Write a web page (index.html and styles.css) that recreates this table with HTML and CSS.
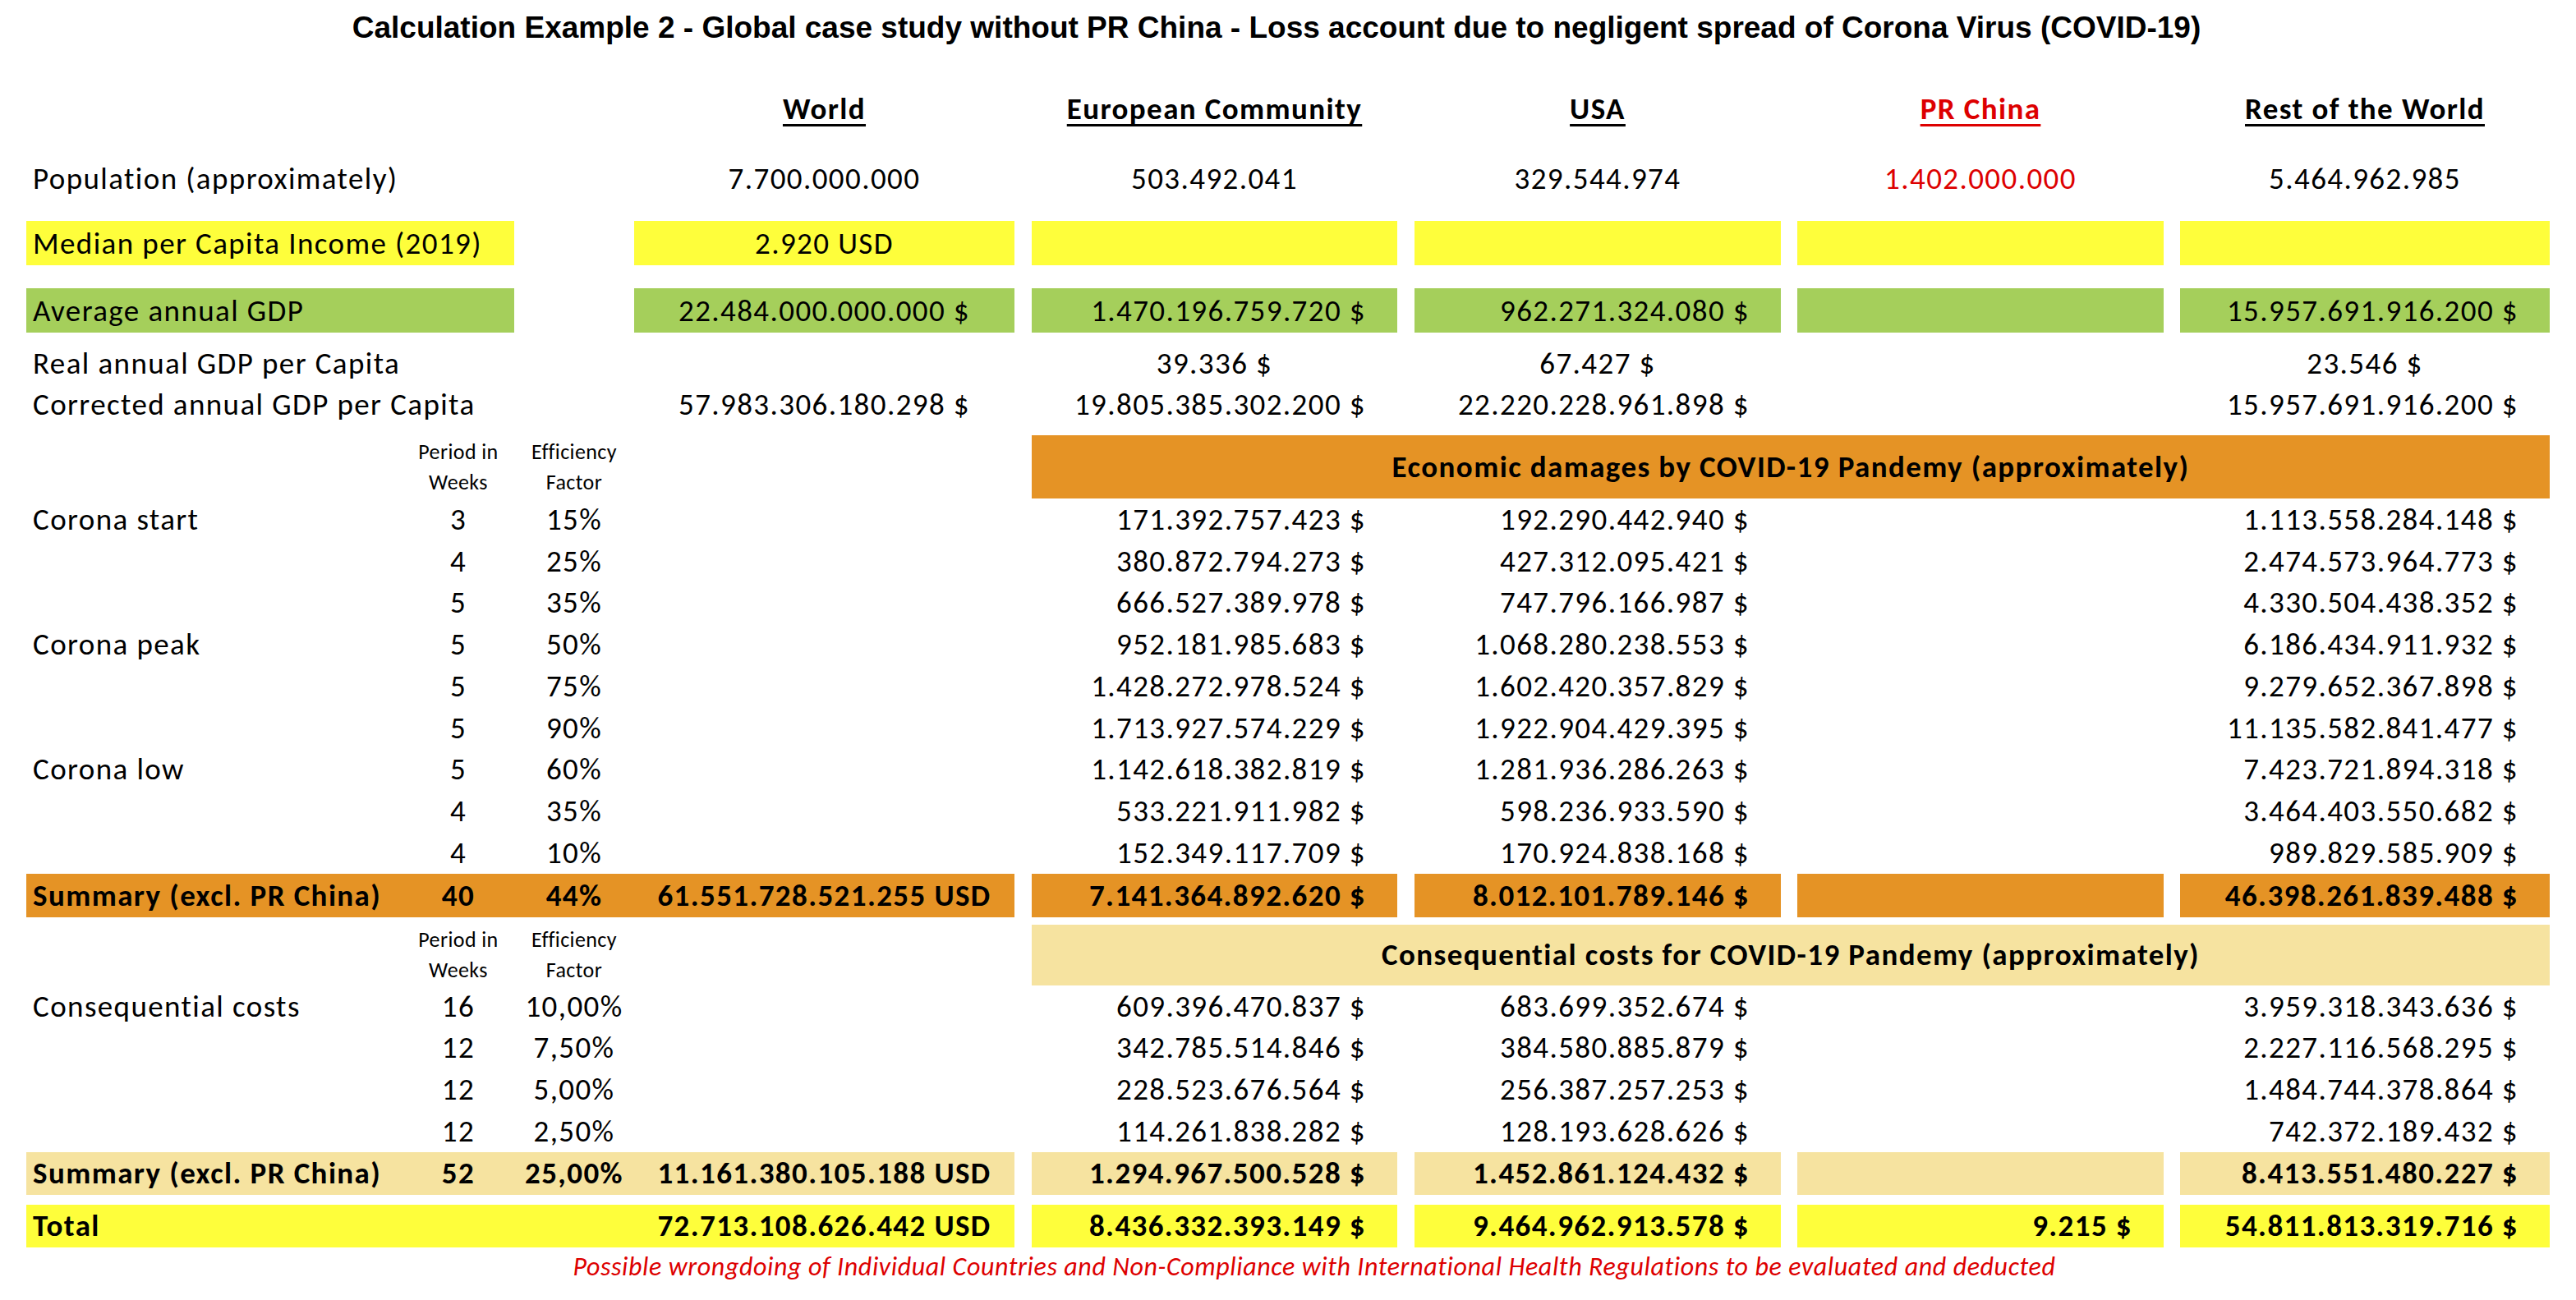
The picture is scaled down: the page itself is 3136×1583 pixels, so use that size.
FILE: index.html
```html
<!DOCTYPE html>
<html lang="en">
<head>
<meta charset="utf-8">
<title>Calculation Example 2</title>
<link rel="stylesheet" href="styles.css">
</head>
<body>
<div class="sheet">
  <h1 class="title">Calculation Example 2 - Global case study without PR China - Loss account due to negligent spread of Corona Virus (COVID-19)</h1>

  <div class="row r-head">
    <div class="cD ctr hd">World</div>
    <div class="cE ctr hd">European Community</div>
    <div class="cF ctr hd">USA</div>
    <div class="cG ctr hd red">PR China</div>
    <div class="cH ctr hd">Rest of the World</div>
  </div>

  <div class="row r-pop">
    <div class="cA lt nw">Population (approximately)</div>
    <div class="cD ctr">7.700.000.000</div>
    <div class="cE ctr">503.492.041</div>
    <div class="cF ctr">329.544.974</div>
    <div class="cG ctr red">1.402.000.000</div>
    <div class="cH ctr">5.464.962.985</div>
  </div>

  <div class="row r-box r-median">
    <div class="cAB lt yellow">Median per Capita Income (2019)</div>
    <div class="cD ctr yellow">2.920 USD</div>
    <div class="cE yellow"></div>
    <div class="cF yellow"></div>
    <div class="cG yellow"></div>
    <div class="cH yellow"></div>
  </div>

  <div class="row r-box r-gdp">
    <div class="cAB lt green">Average annual GDP</div>
    <div class="cD ctr green">22.484.000.000.000 $</div>
    <div class="cE rt green">1.470.196.759.720 $</div>
    <div class="cF rt green">962.271.324.080 $</div>
    <div class="cG green"></div>
    <div class="cH rt green">15.957.691.916.200 $</div>
  </div>

  <div class="row r-line r-real">
    <div class="cA lt nw">Real annual GDP per Capita</div>
    <div class="cE ctr">39.336 $</div>
    <div class="cF ctr">67.427 $</div>
    <div class="cH ctr">23.546 $</div>
  </div>

  <div class="row r-line">
    <div class="cA lt nw">Corrected annual GDP per Capita</div>
    <div class="cD ctr">57.983.306.180.298 $</div>
    <div class="cE rt">19.805.385.302.200 $</div>
    <div class="cF rt">22.220.228.961.898 $</div>
    <div class="cH rt">15.957.691.916.200 $</div>
  </div>

  <div class="row r-section r-econ">
    <div class="cB ctr small">Period in<br>Weeks</div>
    <div class="cC ctr small">Efficiency<br>Factor</div>
    <div class="cEH ctr b orange">Economic damages by COVID-19 Pandemy (approximately)</div>
  </div>

  <div class="row r-data">
    <div class="cA lt nw">Corona start</div>
    <div class="cB ctr">3</div>
    <div class="cC ctr">15%</div>
    <div class="cE rt">171.392.757.423 $</div>
    <div class="cF rt">192.290.442.940 $</div>
    <div class="cH rt">1.113.558.284.148 $</div>
  </div>
  <div class="row r-data">
    <div class="cB ctr">4</div>
    <div class="cC ctr">25%</div>
    <div class="cE rt">380.872.794.273 $</div>
    <div class="cF rt">427.312.095.421 $</div>
    <div class="cH rt">2.474.573.964.773 $</div>
  </div>
  <div class="row r-data">
    <div class="cB ctr">5</div>
    <div class="cC ctr">35%</div>
    <div class="cE rt">666.527.389.978 $</div>
    <div class="cF rt">747.796.166.987 $</div>
    <div class="cH rt">4.330.504.438.352 $</div>
  </div>
  <div class="row r-data">
    <div class="cA lt nw">Corona peak</div>
    <div class="cB ctr">5</div>
    <div class="cC ctr">50%</div>
    <div class="cE rt">952.181.985.683 $</div>
    <div class="cF rt">1.068.280.238.553 $</div>
    <div class="cH rt">6.186.434.911.932 $</div>
  </div>
  <div class="row r-data">
    <div class="cB ctr">5</div>
    <div class="cC ctr">75%</div>
    <div class="cE rt">1.428.272.978.524 $</div>
    <div class="cF rt">1.602.420.357.829 $</div>
    <div class="cH rt">9.279.652.367.898 $</div>
  </div>
  <div class="row r-data">
    <div class="cB ctr">5</div>
    <div class="cC ctr">90%</div>
    <div class="cE rt">1.713.927.574.229 $</div>
    <div class="cF rt">1.922.904.429.395 $</div>
    <div class="cH rt">11.135.582.841.477 $</div>
  </div>
  <div class="row r-data">
    <div class="cA lt nw">Corona low</div>
    <div class="cB ctr">5</div>
    <div class="cC ctr">60%</div>
    <div class="cE rt">1.142.618.382.819 $</div>
    <div class="cF rt">1.281.936.286.263 $</div>
    <div class="cH rt">7.423.721.894.318 $</div>
  </div>
  <div class="row r-data">
    <div class="cB ctr">4</div>
    <div class="cC ctr">35%</div>
    <div class="cE rt">533.221.911.982 $</div>
    <div class="cF rt">598.236.933.590 $</div>
    <div class="cH rt">3.464.403.550.682 $</div>
  </div>
  <div class="row r-data">
    <div class="cB ctr">4</div>
    <div class="cC ctr">10%</div>
    <div class="cE rt">152.349.117.709 $</div>
    <div class="cF rt">170.924.838.168 $</div>
    <div class="cH rt">989.829.585.909 $</div>
  </div>

  <div class="row r-sum b">
    <div class="cA lt nw orange">Summary (excl. PR China)</div>
    <div class="cB ctr orange">40</div>
    <div class="cC ctr orange">44%</div>
    <div class="cD ctr orange">61.551.728.521.255 USD</div>
    <div class="cE rt orange">7.141.364.892.620 $</div>
    <div class="cF rt orange">8.012.101.789.146 $</div>
    <div class="cG orange"></div>
    <div class="cH rt orange">46.398.261.839.488 $</div>
  </div>

  <div class="row r-section r-cons">
    <div class="cB ctr small">Period in<br>Weeks</div>
    <div class="cC ctr small">Efficiency<br>Factor</div>
    <div class="cEH ctr b tan">Consequential costs for COVID-19 Pandemy (approximately)</div>
  </div>

  <div class="row r-data2">
    <div class="cA lt nw">Consequential costs</div>
    <div class="cB ctr">16</div>
    <div class="cC ctr">10,00%</div>
    <div class="cE rt">609.396.470.837 $</div>
    <div class="cF rt">683.699.352.674 $</div>
    <div class="cH rt">3.959.318.343.636 $</div>
  </div>
  <div class="row r-data2">
    <div class="cB ctr">12</div>
    <div class="cC ctr">7,50%</div>
    <div class="cE rt">342.785.514.846 $</div>
    <div class="cF rt">384.580.885.879 $</div>
    <div class="cH rt">2.227.116.568.295 $</div>
  </div>
  <div class="row r-data2">
    <div class="cB ctr">12</div>
    <div class="cC ctr">5,00%</div>
    <div class="cE rt">228.523.676.564 $</div>
    <div class="cF rt">256.387.257.253 $</div>
    <div class="cH rt">1.484.744.378.864 $</div>
  </div>
  <div class="row r-data2">
    <div class="cB ctr">12</div>
    <div class="cC ctr">2,50%</div>
    <div class="cE rt">114.261.838.282 $</div>
    <div class="cF rt">128.193.628.626 $</div>
    <div class="cH rt">742.372.189.432 $</div>
  </div>

  <div class="row r-sum2 b">
    <div class="cA lt nw tan">Summary (excl. PR China)</div>
    <div class="cB ctr tan">52</div>
    <div class="cC ctr tan">25,00%</div>
    <div class="cD ctr tan">11.161.380.105.188 USD</div>
    <div class="cE rt tan">1.294.967.500.528 $</div>
    <div class="cF rt tan">1.452.861.124.432 $</div>
    <div class="cG tan"></div>
    <div class="cH rt tan">8.413.551.480.227 $</div>
  </div>

  <div class="row r-total b">
    <div class="cA lt nw yellow">Total</div>
    <div class="cB yellow"></div>
    <div class="cC yellow"></div>
    <div class="cD ctr yellow">72.713.108.626.442 USD</div>
    <div class="cE rt yellow">8.436.332.393.149 $</div>
    <div class="cF rt yellow">9.464.962.913.578 $</div>
    <div class="cG rt yellow">9.215 $</div>
    <div class="cH rt yellow">54.811.813.319.716 $</div>
  </div>

  <p class="foot">Possible wrongdoing of Individual Countries and Non-Compliance with International Health Regulations to be evaluated and deducted</p>
</div>
</body>
</html>
```

FILE: styles.css
```css
html, body {
  margin: 0;
  padding: 0;
  background: #ffffff;
}

.sheet {
  width: 3072px;
  margin-left: 32px;
  display: flex;
  flex-direction: column;
  font-family: "Carlito", "Lato", "Liberation Sans", sans-serif;
  font-size: 37px;
  letter-spacing: 1.4px;
  color: #000000;
}

.title {
  margin: 0;
  height: 68px;
  line-height: 68px;
  padding-right: 28px;
  text-align: center;
  font-family: "Liberation Sans", Arial, sans-serif;
  font-weight: bold;
  font-size: 37px;
  letter-spacing: 0;
  white-space: nowrap;
}

.row {
  display: grid;
  grid-template-columns: 458px 136px 146px 463px 21px 445px 21px 446px 20px 446px 20px 450px;
  grid-template-rows: 100%;
}

.row > div {
  display: flex;
  align-items: center;
  line-height: 1;
  white-space: nowrap;
  min-width: 0;
}

.cA { grid-column: 1; }
.cB { grid-column: 2; }
.cC { grid-column: 3; }
.cD { grid-column: 4; }
.cE { grid-column: 6; }
.cF { grid-column: 8; }
.cG { grid-column: 10; }
.cH { grid-column: 12; }
.cAB { grid-column: 1 / span 2; }
.cEH { grid-column: 6 / 13; }

.ctr { justify-content: center; }
.rt { justify-content: flex-end; padding-right: 38px; }
.lt { justify-content: flex-start; padding-left: 8px; }
.nw { overflow: visible; }

.b { font-weight: bold; }
.row.b > div { font-weight: bold; }

.red { color: #dd0000; }

.yellow { background: #fefe3b; }
.green { background: #a5cf5b; }
.orange { background: #e59325; }
.tan { background: #f6e3a0; }

.hd {
  font-weight: bold;
  text-decoration: underline;
  text-decoration-thickness: 3px;
  text-underline-offset: 6px;
}
.hd.red { text-decoration-color: #dd0000; }

.r-head { margin-top: 32px; height: 64px; }
.r-pop { margin-top: 26px; height: 54px; }
.r-median { margin-top: 25px; height: 54px; }
.r-gdp { margin-top: 28px; height: 54px; }
.r-real { margin-top: 12px; }
.r-line { height: 50px; }
.r-econ { margin-top: 13px; height: 77px; }
.r-data { height: 50.75px; }
.r-sum { height: 53px; }
.r-cons { margin-top: 9px; height: 74px; }
.r-data2 { height: 50.75px; }
.r-sum2 { height: 52px; }
.r-total { margin-top: 12px; height: 52px; }

.small {
  font-size: 26px;
  letter-spacing: 0.4px;
  text-align: center;
}
.row > div.small {
  line-height: 37px;
  white-space: normal;
}

.foot {
  margin: 0;
  height: 48px;
  line-height: 48px;
  padding-left: 64px;
  text-align: center;
  font-style: italic;
  font-size: 32px;
  letter-spacing: 0.6px;
  color: #dd0000;
}
```
